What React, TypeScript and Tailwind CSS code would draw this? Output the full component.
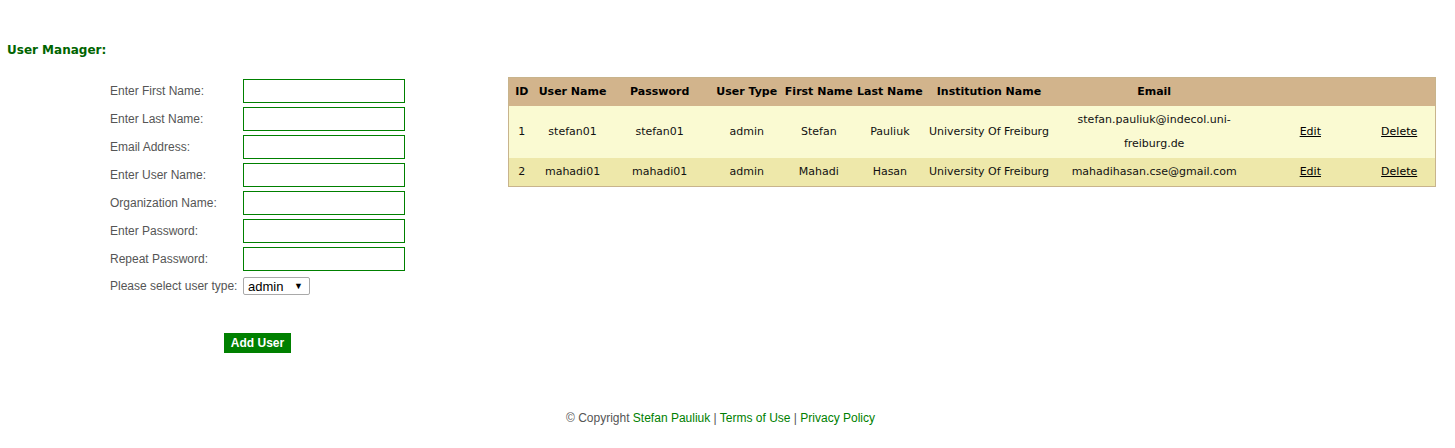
import React from "react";

const labels = [
  "Enter First Name:",
  "Enter Last Name:",
  "Email Address:",
  "Enter User Name:",
  "Organization Name:",
  "Enter Password:",
  "Repeat Password:",
];

type Row = {
  id: string;
  user: string;
  pass: string;
  type: string;
  first: string;
  last: string;
  inst: string;
  email: string;
};

const rows: Row[] = [
  {
    id: "1",
    user: "stefan01",
    pass: "stefan01",
    type: "admin",
    first: "Stefan",
    last: "Pauliuk",
    inst: "University Of Freiburg",
    email: "stefan.pauliuk@indecol.uni-freiburg.de",
  },
  {
    id: "2",
    user: "mahadi01",
    pass: "mahadi01",
    type: "admin",
    first: "Mahadi",
    last: "Hasan",
    inst: "University Of Freiburg",
    email: "mahadihasan.cse@gmail.com",
  },
];

export default function App() {
  return (
    <div className="w-[1455px] h-[448px] bg-white relative font-['Liberation_Sans',Arial,sans-serif]">
      <div className="pt-[42px] pl-[7px] h-[77px]">
        <h2 className="text-[12px] leading-[16px] font-bold text-[#006400] font-['DejaVu_Sans',sans-serif]">
          User Manager:
        </h2>
      </div>
      <div className="flex items-start">
        <div className="pl-[110px] pt-[2px] w-[508px] shrink-0">
          <div className="flex flex-col gap-[4px]">
            {labels.map((l) => (
              <div key={l} className="flex items-center h-[24px]">
                <span className="w-[133px] text-[12px] text-[#555555]">{l}</span>
                <input
                  type="text"
                  className="w-[162px] h-[24px] border border-[#008000] bg-white outline-none"
                />
              </div>
            ))}
            <div className="flex items-center h-[18px] mt-[2px]">
              <span className="w-[133px] text-[12px] text-[#555555]">Please select user type:</span>
              <div className="w-[67px] h-[18px] border border-[#a9a9a9] rounded-[2px] flex items-center justify-between pl-[4px] pr-[6px] text-[13px] text-black">
                <span className="leading-none">admin</span>
                <span className="text-[9px] leading-none">▼</span>
              </div>
            </div>
          </div>
          <div className="pl-[114px] mt-[35px]">
            <button className="w-[67px] h-[20px] bg-[#008000] text-white text-[12px] font-bold leading-none">
              Add User
            </button>
          </div>
        </div>
        <table className="table-fixed border-collapse border border-[#c8b48c] w-[928px] text-[11px] text-[#111111] font-['DejaVu_Sans',sans-serif]">
          <colgroup>
            <col className="w-[26px]" />
            <col className="w-[76px]" />
            <col className="w-[98px]" />
            <col className="w-[76px]" />
            <col className="w-[68px]" />
            <col className="w-[74px]" />
            <col className="w-[124px]" />
            <col className="w-[206px]" />
            <col className="w-[106px]" />
            <col className="w-[72px]" />
          </colgroup>
          <thead>
            <tr className="bg-[#d2b48c] h-[28px]">
              {["ID", "User Name", "Password", "User Type", "First Name", "Last Name", "Institution Name", "Email", "", ""].map(
                (h, i) => (
                  <th key={i} className="text-[11px] font-bold text-black text-center px-0 whitespace-nowrap">
                    {h}
                  </th>
                )
              )}
            </tr>
          </thead>
          <tbody>
            {rows.map((r, i) => (
              <tr key={r.id} className={i === 0 ? "bg-[#fafad2]" : "bg-[#eee8aa]"}>
                <td className="text-center py-[2px] leading-[24px]">{r.id}</td>
                <td className="text-center py-[2px] leading-[24px]">{r.user}</td>
                <td className="text-center py-[2px] leading-[24px]">{r.pass}</td>
                <td className="text-center py-[2px] leading-[24px]">{r.type}</td>
                <td className="text-center py-[2px] leading-[24px]">{r.first}</td>
                <td className="text-center py-[2px] leading-[24px]">{r.last}</td>
                <td className="text-center py-[2px] leading-[24px] whitespace-nowrap">{r.inst}</td>
                <td className="text-center py-[2px] leading-[24px] px-[20px]">{r.email}</td>
                <td className="text-center py-[2px] leading-[24px]">
                  <a href="#" className="underline text-black">Edit</a>
                </td>
                <td className="text-center py-[2px] leading-[24px]">
                  <a href="#" className="underline text-black">Delete</a>
                </td>
              </tr>
            ))}
          </tbody>
        </table>
      </div>
      <div className="absolute left-0 top-[410px] w-[1441px] text-center text-[12px] leading-[16px] text-[#555555]">
        © Copyright <a href="#" className="text-[#008000]">Stefan Pauliuk</a> |{" "}
        <a href="#" className="text-[#008000]">Terms of Use</a> |{" "}
        <a href="#" className="text-[#008000]">Privacy Policy</a>
      </div>
    </div>
  );
}
